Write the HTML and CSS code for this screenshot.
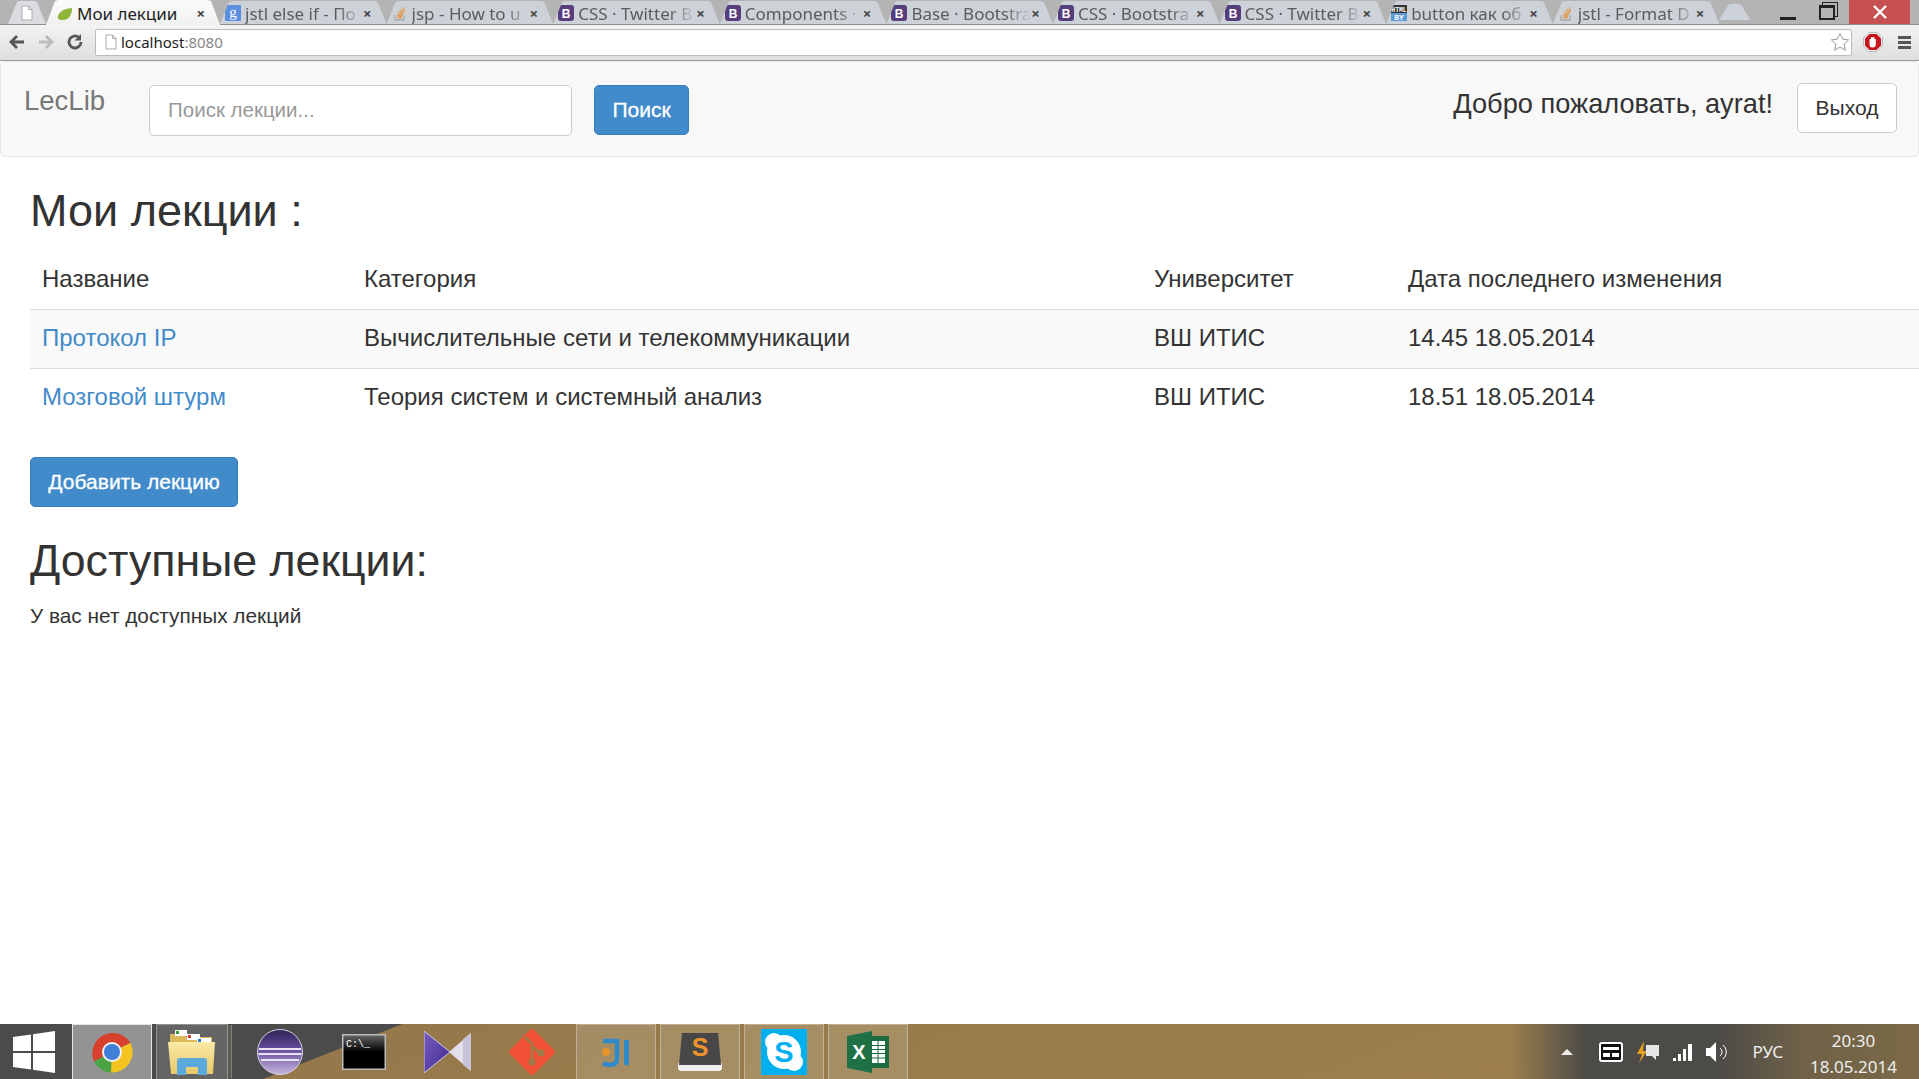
FILE: index.html
```html
<!DOCTYPE html>
<html lang="ru">
<head>
    <meta charset="UTF-8">
    <title>Мои лекции</title>
    <link rel="stylesheet" href="styles.css">
</head>
<body>
    <svg class="icon-defs" width="0" height="0">
        <symbol id="fav-b" viewBox="0 0 16 16">
            <rect width="16" height="16" rx="3" fill="#563d7c"/>
            <text x="8" y="12.500" text-anchor="middle" font-family="Liberation Sans" font-weight="700" font-size="12" fill="#fff">B</text>
        </symbol>
        <symbol id="fav-so" viewBox="0 0 16 16">
            <path d="M3 10v5h9v-5" fill="none" stroke="#aaa" stroke-width="1.300"/>
            <path d="M5 12.500h5M5 10.500l5 .6M5.600 8.500l4.800 1.600M6.800 6.200l4 2.800M8.600 4.200l3 3.800M11 2.400l1.600 4.400" stroke="#e29a4b" stroke-width="1.300" fill="none"/>
        </symbol>
        <symbol id="page" viewBox="0 0 12 16">
            <path d="M1 1h6.500L11 4.500V15H1z" fill="#fff" stroke="#aaa"/>
            <path d="M7.500 1v3.500H11" fill="none" stroke="#aaa"/>
        </symbol>
    </svg>

    <div class="browser-top">
        <div class="tabstrip">
            <div class="tab tab-blank">
                <svg width="12" height="16"><use href="#page"/></svg>
            </div>
            <div class="tab tab-active">
                <svg class="favicon" viewBox="0 0 16 16">
                    <path d="M1 14C0 8 5 4 15 3c0 7-3 12-9 12-2 0-4-.5-5-1z" fill="#8fb63a"/>
                </svg>
                <span class="tab-title">Мои лекции</span>
                <span class="tab-close">×</span>
            </div>
            <div class="tab">
                <svg class="favicon" viewBox="0 0 16 16">
                    <rect width="16" height="16" rx="1" fill="#5c8fe0"/>
                    <text x="8" y="12" text-anchor="middle" font-family="Liberation Serif" font-size="15" fill="#fff">g</text>
                </svg>
                <span class="tab-title">jstl else if - По</span>
                <span class="tab-close">×</span>
            </div>
            <div class="tab">
                <svg class="favicon"><use href="#fav-so"/></svg>
                <span class="tab-title">jsp - How to u</span>
                <span class="tab-close">×</span>
            </div>
            <div class="tab">
                <svg class="favicon"><use href="#fav-b"/></svg>
                <span class="tab-title">CSS · Twitter B</span>
                <span class="tab-close">×</span>
            </div>
            <div class="tab">
                <svg class="favicon"><use href="#fav-b"/></svg>
                <span class="tab-title">Components ·</span>
                <span class="tab-close">×</span>
            </div>
            <div class="tab">
                <svg class="favicon"><use href="#fav-b"/></svg>
                <span class="tab-title">Base · Bootstra</span>
                <span class="tab-close">×</span>
            </div>
            <div class="tab">
                <svg class="favicon"><use href="#fav-b"/></svg>
                <span class="tab-title">CSS · Bootstra</span>
                <span class="tab-close">×</span>
            </div>
            <div class="tab">
                <svg class="favicon"><use href="#fav-b"/></svg>
                <span class="tab-title">CSS · Twitter B</span>
                <span class="tab-close">×</span>
            </div>
            <div class="tab">
                <svg class="favicon" viewBox="0 0 16 16">
                    <rect width="16" height="8" fill="#333"/>
                    <rect y="8" width="16" height="8" fill="#5c9ad8"/>
                    <text x="8" y="6.500" text-anchor="middle" font-family="Liberation Mono" font-weight="700" font-size="6.400" fill="#fff">HTML</text>
                    <text x="8" y="14.500" text-anchor="middle" font-family="Liberation Mono" font-weight="700" font-size="8" fill="#fff">BY</text>
                </svg>
                <span class="tab-title">button как об</span>
                <span class="tab-close">×</span>
            </div>
            <div class="tab">
                <svg class="favicon"><use href="#fav-so"/></svg>
                <span class="tab-title">jstl - Format D</span>
                <span class="tab-close">×</span>
            </div>
            <div class="tab tab-new"></div>
            <div class="window-controls">
                <span class="win-min"></span>
                <span class="win-restore"></span>
                <span class="win-close">
                    <svg width="16" height="16" viewBox="0 0 16 16"><path d="M2 2l12 12M14 2L2 14" stroke="#fff" stroke-width="2.400"/></svg>
                </span>
            </div>
        </div>

        <div class="toolbar">
            <svg width="18" height="18" viewBox="0 0 18 18"><path d="M16 9H4M9 3L3 9l6 6" fill="none" stroke="#555" stroke-width="2.800"/></svg>
            <svg width="18" height="18" viewBox="0 0 18 18"><path d="M2 9h12M9 3l6 6-6 6" fill="none" stroke="#bbb" stroke-width="2.800"/></svg>
            <svg width="18" height="18" viewBox="0 0 18 18"><path d="M15 9a6 6 0 1 1-2-4.500" fill="none" stroke="#555" stroke-width="2.800"/><path d="M15 1v6.500H8.500z" fill="#555"/></svg>
            <div class="address-bar">
                <svg class="address-page" width="12" height="16"><use href="#page"/></svg>
                <span class="address-host">localhost</span><span class="address-port">:8080</span>
                <svg class="address-star" width="20" height="20" viewBox="0 0 20 20"><path d="M10 1.500l2.600 5.600 6 .8-4.400 4.200 1.100 6.100L10 15.200l-5.300 3 1.100-6.100L1.400 7.900l6-.8z" fill="#fff" stroke="#999"/></svg>
            </div>
            <svg class="adblock" width="20" height="20" viewBox="0 0 20 20">
                <path d="M6 .5h8l5.500 5.500v8L14 19.500H6L.5 14V6z" fill="#eee" stroke="#999" stroke-width=".6"/>
                <path d="M6.500 2h7L18 6.500v7L13.500 18h-7L2 13.500v-7z" fill="#c8141c"/>
                <path d="M6.500 7.500a.9.900 0 0 1 1.500-.5V5.500a.9.900 0 0 1 1.700 0 .9.900 0 0 1 1.700 0V7a.9.900 0 0 1 1.400.5v5a3 3 0 0 1-3 3h-.8a3 3 0 0 1-2.500-3z" fill="#fff"/>
            </svg>
            <div class="chrome-menu"><i></i><i></i><i></i></div>
        </div>
    </div>

    <nav class="navbar">
        <a class="brand" href="#">LecLib</a>
        <form class="search-form">
            <input class="search-input" type="text" placeholder="Поиск лекции...">
            <button class="btn btn-primary btn-search" type="button">Поиск</button>
        </form>
        <div class="navbar-right">
            <span class="welcome">Добро пожаловать, ayrat!</span>
            <button class="btn btn-default" type="button">Выход</button>
        </div>
    </nav>

    <main class="content">
        <h1>Мои лекции :</h1>
        <table class="lectures">
            <thead>
                <tr>
                    <th class="col-name">Название</th>
                    <th class="col-category">Категория</th>
                    <th class="col-university">Университет</th>
                    <th>Дата последнего изменения</th>
                </tr>
            </thead>
            <tbody>
                <tr>
                    <td><a href="#">Протокол IP</a></td>
                    <td>Вычислительные сети и телекоммуникации</td>
                    <td>ВШ ИТИС</td>
                    <td>14.45 18.05.2014</td>
                </tr>
                <tr>
                    <td><a href="#">Мозговой штурм</a></td>
                    <td>Теория систем и системный анализ</td>
                    <td>ВШ ИТИС</td>
                    <td>18.51 18.05.2014</td>
                </tr>
            </tbody>
        </table>
        <button class="btn btn-primary btn-add" type="button">Добавить лекцию</button>
        <h2>Доступные лекции:</h2>
        <p class="empty-note">У вас нет доступных лекций</p>
    </main>

    <footer class="taskbar">
        <div class="start">
            <svg width="42" height="42" viewBox="0 0 42 42"><path d="M0 6l18-2.500V20H0zM20 3.200L42 0v20H20zM0 22h18v16.500L0 36zM20 22h22v20l-22-3.200z" fill="#fff"/></svg>
        </div>
        <div class="task task-active">
            <svg width="44" height="44" viewBox="-22 -22 44 44">
                <path d="M0 0L18.500-9A20.500 20.500 0 0 0-18 9.500z" fill="#d8402e"/>
                <path d="M0 0L-18 9.500A20.500 20.500 0 0 0-1 20.500z" fill="#4ba344"/>
                <path d="M0 0L-1 20.500A20.500 20.500 0 0 0 18.500-9z" fill="#f4c522"/>
                <circle r="10" fill="#f3f3f3"/>
                <circle r="8" fill="#3f80d6"/>
            </svg>
        </div>
        <div class="task task-open task-stacked">
            <svg width="48" height="48" viewBox="0 0 48 48">
                <defs>
                    <linearGradient id="folder-front" x1="0" y1="0" x2="0" y2="1">
                        <stop offset="0" stop-color="#fbeaa8"/>
                        <stop offset="1" stop-color="#e9c868"/>
                    </linearGradient>
                </defs>
                <path d="M2 6h14l2 3h26v28H2z" fill="#dcb95a"/>
                <rect x="7" y="2" width="12" height="6" fill="#fff"/>
                <rect x="19" y="6" width="13" height="6" fill="#fff"/>
                <rect x="29" y="10" width="14" height="6" fill="#fff"/>
                <rect x="8" y="3" width="3" height="3" fill="#3a9a3a"/>
                <rect x="20" y="7" width="3" height="3" fill="#c8402a"/>
                <rect x="30" y="11" width="3" height="3" fill="#2a7ac8"/>
                <path d="M0 14h47l-2 32H3z" fill="url(#folder-front)"/>
                <path d="M9 47V33a3 3 0 0 1 3-3h24a3 3 0 0 1 3 3v14h-9v-8H18v8z" fill="#5aa9dc"/>
            </svg>
        </div>
        <div class="task">
            <svg width="46" height="46" viewBox="0 0 46 46">
                <defs>
                    <linearGradient id="eclipse-ball" x1="0" y1="0" x2="0" y2="1">
                        <stop offset="0" stop-color="#2c2255"/>
                        <stop offset=".45" stop-color="#6a4d9e"/>
                        <stop offset="1" stop-color="#c4b6de"/>
                    </linearGradient>
                </defs>
                <circle cx="23" cy="23" r="22.500" fill="url(#eclipse-ball)" stroke="#d8d2e4"/>
                <path d="M2 20h42M1.500 25h43M4 31h38" stroke="#ebe6f3" stroke-width="1.800"/>
            </svg>
        </div>
        <div class="task">
            <svg width="44" height="36" viewBox="0 0 44 36">
                <defs>
                    <linearGradient id="cmd-screen" x1="0" y1="0" x2="0" y2="1">
                        <stop offset="0" stop-color="#666"/>
                        <stop offset=".5" stop-color="#000"/>
                    </linearGradient>
                </defs>
                <rect x=".75" y=".75" width="42.500" height="34.500" fill="url(#cmd-screen)" stroke="#bbb" stroke-width="1.500"/>
                <text x="4" y="13" font-family="Liberation Mono" font-size="10" fill="#fff">C:\_</text>
            </svg>
        </div>
        <div class="task">
            <svg width="48" height="42" viewBox="0 0 48 42">
                <defs>
                    <linearGradient id="vs-left" x1="0" y1="0" x2="1" y2="1">
                        <stop offset="0" stop-color="#7a5cc0"/>
                        <stop offset="1" stop-color="#3c2a90"/>
                    </linearGradient>
                </defs>
                <path d="M0 0l26 21L0 42z" fill="url(#vs-left)" stroke="#cfc8e6"/>
                <path d="M47 2L25 21l22 19z" fill="#e2dfea"/>
                <path d="M47 2v38l-8-6V8z" fill="#c8c3d8"/>
            </svg>
        </div>
        <div class="task">
            <svg width="48" height="48" viewBox="0 0 48 48">
                <rect x="7" y="7" width="34" height="34" rx="3" transform="rotate(45 24 24)" fill="#f05033"/>
                <path d="M17 9l7 7M24 16v17M24 18l8 7" stroke="#9c7d49" stroke-width="2.500" fill="none"/>
                <circle cx="24" cy="34" r="3.500" fill="#9c7d49"/>
                <circle cx="33" cy="25" r="3.500" fill="#9c7d49"/>
            </svg>
        </div>
        <div class="task task-open">
            <svg width="30" height="30" viewBox="0 0 30 30">
                <circle cx="5" cy="15" r="4" fill="#e8952a"/>
                <path d="M2 4h14v18c0 7-9 7-14 4" fill="none" stroke="#2f8ac9" stroke-width="4.500"/>
                <path d="M23 3v23a2.500 2.500 0 0 0 5 0V3z" fill="#2f8ac9"/>
            </svg>
        </div>
        <div class="task task-open">
            <svg width="44" height="40" viewBox="0 0 44 40">
                <rect y="30" width="44" height="9" rx="3" fill="#eee"/>
                <path d="M4 1h36l3 32H1z" fill="#474747"/>
                <text x="22" y="24" text-anchor="middle" font-family="Liberation Sans" font-weight="700" font-size="25" fill="#f0922c">S</text>
            </svg>
        </div>
        <div class="task task-open">
            <svg width="46" height="46" viewBox="0 0 46 46">
                <rect width="46" height="46" fill="#00aff0"/>
                <circle cx="23" cy="23" r="17" fill="#fff"/>
                <circle cx="13" cy="13" r="9" fill="#fff"/>
                <circle cx="33" cy="33" r="9" fill="#fff"/>
                <text x="23" y="33" text-anchor="middle" font-family="Liberation Sans" font-weight="700" font-size="29" fill="#00aff0">S</text>
            </svg>
        </div>
        <div class="task task-open">
            <svg width="42" height="42" viewBox="0 0 42 42">
                <rect x="20" y="5" width="22" height="32" fill="#1d6b41"/>
                <path d="M25 10h13v22H25z" fill="#fff"/>
                <path d="M25 14.500h13M25 18.500h13M25 22.500h13M25 27h13M31 10v22" stroke="#1d6b41"/>
                <path d="M0 5l25-5v42L0 37z" fill="#1f7145"/>
                <text x="12" y="28" text-anchor="middle" font-family="Liberation Sans" font-weight="700" font-size="20" fill="#fff">X</text>
            </svg>
        </div>

        <div class="tray">
            <span class="tray-arrow"></span>
            <svg width="24" height="20" viewBox="0 0 24 20"><rect x="1" y="1" width="22" height="18" rx="2" fill="#111" stroke="#fff" stroke-width="2"/><path d="M4 5h16v3H4zM4 11h7v4H4zM13 11h7v4h-7z" fill="#fff"/></svg>
            <svg width="24" height="24" viewBox="0 0 24 24"><path d="M8 1L1 14h5l-3 9 8-12H7z" fill="#e8a020"/><path d="M10 5h13v11h-3v4l-4-4h-6z" fill="#e6e6e6"/></svg>
            <svg width="20" height="18" viewBox="0 0 20 18"><path d="M0 15h3v3H0zM5 11h3v7H5zM10 6h3v12h-3zM15 1h4v17h-4z" fill="#fff"/></svg>
            <svg width="24" height="22" viewBox="0 0 24 22"><path d="M0 7h4l6-6v20l-6-6H0z" fill="#fff"/><path d="M14 7a5 5 0 0 1 0 8M17 4a9 9 0 0 1 0 14" fill="none" stroke="#fff"/></svg>
            <span class="tray-lang">РУС</span>
            <div class="clock">
                <span>20:30</span>
                <span>18.05.2014</span>
            </div>
        </div>
    </footer>
</body>
</html>
```

FILE: styles.css
```css
* {
    box-sizing: border-box;
}

html, body {
    height: 100%;
}

body {
    margin: 0;
    display: flex;
    flex-direction: column;
    overflow: hidden;
    background: #fff;
    color: #333;
    font-family: "Liberation Sans", Arial, sans-serif;
    font-size: 24px;
}

a {
    color: #428bca;
    text-decoration: none;
}

.icon-defs {
    display: none;
}

/* browser chrome */
.browser-top {
    height: 61px;
    flex-shrink: 0;
    background: #e4e4e4;
    border-bottom: 1px solid #9a9a9a;
}

.tabstrip {
    display: flex;
    align-items: flex-end;
    height: 25px;
    padding-left: 8px;
    background: #b4b4b4;
    border-bottom: 1px solid #8f8f8f;
}

.tab {
    display: flex;
    align-items: center;
    flex-shrink: 0;
    width: 166.6px;
    height: 23px;
    padding: 1px 15px 0 5px;
    background: #cdd1d8;
    clip-path: polygon(0 100%, 9px 4%, 12px 0, calc(100% - 12px) 0, calc(100% - 9px) 4%, 100% 100%);
    color: #5c5c5c;
    font-family: "Noto Sans", sans-serif;
    font-size: 17px;
}

.tab-blank {
    width: 38px;
    justify-content: center;
    padding: 0;
    background: #dadcdf;
}

.tab-active {
    width: 174px;
    height: 25px;
    margin-bottom: -1px;
    padding-left: 11px;
    background: linear-gradient(#fbfbfb, #f1f1f1);
    color: #222;
}

.tab-new {
    width: 31px;
    height: 16px;
    margin-bottom: 4px;
    padding: 0;
}

.favicon {
    flex-shrink: 0;
    width: 16px;
    height: 16px;
    margin-right: 4px;
}

.tab-title {
    flex: 1;
    white-space: nowrap;
    -webkit-mask-image: linear-gradient(to right, #000 78%, transparent 100%);
    mask-image: linear-gradient(to right, #000 78%, transparent 100%);
}

.tab-active .tab-title {
    -webkit-mask-image: none;
    mask-image: none;
}

.tab-close {
    color: #444;
    font-size: 15px;
    font-weight: 700;
}

.window-controls {
    display: flex;
    align-self: flex-start;
    align-items: center;
    height: 24px;
    margin-left: auto;
    margin-right: 9px;
}

.win-min {
    width: 16px;
    height: 3px;
    margin: 12px 23px 0 0;
    background: #222;
}

.win-restore {
    width: 16px;
    height: 15px;
    margin-right: 14px;
    border: 2px solid #222;
    border-top-width: 3px;
    box-shadow: 3px -3px 0 -1px #b4b4b4, 3px -3px 0 0 #222;
}

.win-close {
    display: flex;
    align-items: center;
    justify-content: center;
    width: 61px;
    height: 24px;
    background: #c75050;
}

.toolbar {
    display: flex;
    align-items: center;
    gap: 11px;
    height: 35px;
    padding: 2px 8px 3px 8px;
    background: linear-gradient(#f3f3f3, #dedede);
}

.address-bar {
    flex: 1;
    display: flex;
    align-items: center;
    height: 27px;
    padding: 0 1px 0 9px;
    background: #fff;
    border: 1px solid #bcbcbc;
    border-radius: 2px;
    font-family: "Noto Sans", sans-serif;
    font-size: 15px;
}

.address-page {
    margin-right: 4px;
}

.address-host {
    color: #222;
}

.address-port {
    color: #888;
}

.address-star {
    margin-left: auto;
}

.adblock {
    margin-right: 4px;
}

.chrome-menu {
    display: flex;
    flex-direction: column;
    gap: 2px;
    width: 13px;
}

.chrome-menu i {
    height: 3px;
    background: #555;
}

/* navbar */
.navbar {
    display: flex;
    flex-shrink: 0;
    height: 96px;
    padding: 0 21px 0 23px;
    background: #f8f8f8;
    border: 1px solid #e7e7e7;
    border-radius: 5px;
}

.brand {
    margin-top: 23px;
    color: #777;
    font-size: 27.500px;
}

.search-form {
    display: flex;
    gap: 22px;
    margin: 23px 0 0 44px;
}

.search-input {
    width: 423px;
    height: 51px;
    padding: 0 18px 2px;
    background: #fff;
    border: 1px solid #ccc;
    border-radius: 5px;
    color: #555;
    font-family: inherit;
    font-size: 20.500px;
}

.search-input::placeholder {
    color: #999;
}

.btn {
    border: 1px solid transparent;
    border-radius: 5px;
    font-family: inherit;
    font-size: 21px;
}

.btn-primary {
    background: #428bca;
    border-color: #357ebd;
    color: #fff;
    -webkit-text-stroke: .3px #fff;
}

.btn-default {
    width: 100px;
    height: 50px;
    background: #fff;
    border-color: #ccc;
    color: #333;
}

.btn-search {
    width: 95px;
    height: 50px;
}

.navbar-right {
    display: flex;
    gap: 24px;
    margin: 21px 0 0 auto;
}

.welcome {
    margin-top: 5px;
    color: #333;
    font-size: 27.200px;
}

/* page content */
.content {
    flex: 1;
    padding-left: 30px;
}

h1, h2 {
    margin: 0;
    font-weight: 400;
    font-size: 45px;
    line-height: 1.1;
}

h2 {
    margin-top: 29px;
    font-size: 44.700px;
}

h1 {
    margin-top: 29px;
}

.lectures {
    width: 1889px;
    margin-top: 15px;
    table-layout: fixed;
    border-collapse: collapse;
}

.lectures th, .lectures td {
    height: 59px;
    padding: 0 13px 2px;
    text-align: left;
    font-weight: 400;
    border-top: 1px solid #ddd;
}

.lectures th {
    border-top: none;
}

.lectures th:first-child, .lectures td:first-child {
    padding-left: 12px;
}

.lectures tbody tr:first-child {
    background: #f9f9f9;
}

.col-name {
    width: 321px;
}

.col-category {
    width: 790px;
}

.col-university {
    width: 254px;
}

.btn-add {
    display: block;
    width: 208px;
    height: 50px;
    margin-top: 29px;
    padding: 0;
}

.empty-note {
    margin: 19px 0 0;
    font-size: 20.800px;
}

/* windows taskbar */
.taskbar {
    display: flex;
    flex-shrink: 0;
    align-items: stretch;
    gap: 4px;
    height: 55px;
    background:
        linear-gradient(90deg, rgba(77, 75, 71, 0) 1510px, #4d4b47 1585px, #4d4b47 1720px, #6f6148 1800px, #7c6a47 1919px),
        linear-gradient(158.500deg, #4b4b4b 147px, #95794a 148px, #a88a52 1400px, #8f7447 100%);
}

.start {
    display: flex;
    align-items: center;
    justify-content: center;
    width: 68px;
}

.task {
    display: flex;
    align-items: center;
    justify-content: center;
    width: 80px;
}

.task-open {
    background: rgba(255, 255, 255, .14);
    border: 1px solid rgba(255, 255, 255, .3);
    border-bottom: none;
}

.task-active {
    background: rgba(255, 255, 255, .4);
    border: 1px solid rgba(255, 255, 255, .75);
    border-bottom: none;
}

.task-stacked {
    width: 72px;
    margin-right: 8px;
    box-shadow: 4px 0 0 -1px #5d5a52, 5px 0 0 -1px rgba(255, 255, 255, .3);
}

.tray {
    display: flex;
    flex: 1;
    align-items: center;
    gap: 13px;
    justify-content: flex-end;
    padding-right: 22px;
    color: #fff;
}

.tray-arrow {
    width: 0;
    height: 0;
    margin-right: 13px;
    border: 6px solid transparent;
    border-top: none;
    border-bottom: 6px solid #eee;
}

.tray-lang {
    margin: 0 14px 0 9px;
    font-family: "Noto Sans", sans-serif;
    font-size: 17px;
    color: #eee;
}

.clock {
    display: flex;
    flex-direction: column;
    align-items: center;
    gap: 4px;
    margin-top: 4px;
    font-family: "Noto Sans", sans-serif;
    font-size: 17px;
    line-height: 22px;
    color: #eee;
}
```
